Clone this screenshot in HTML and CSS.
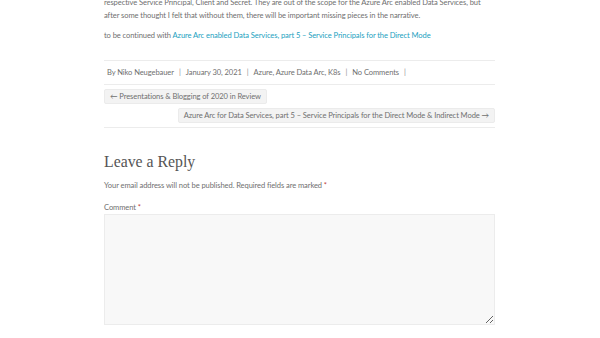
FILE: index.html
```html
<!DOCTYPE html>
<html>
<head>
<meta charset="utf-8">
<link rel="stylesheet" href="styles.css">
</head>
<body>
<div class="page">
  <div class="entry">
    <p class="para first">respective Service Principal, Client and Secret. They are out of the scope for the Azure Arc enabled Data Services, but after some thought I felt that without them, there will be important missing pieces in the narrative.</p>
    <p class="para">to be continued with <a href="#">Azure Arc enabled Data Services, part 5 – Service Principals for the Direct Mode</a></p>
  </div>
  <div class="meta">
    <span>By Niko Neugebauer</span><span class="sep">|</span><span>January 30, 2021</span><span class="sep">|</span><span>Azure, Azure Data Arc, K8s</span><span class="sep">|</span><span>No Comments</span><span class="sep">|</span>
  </div>
  <nav class="postnav">
    <div class="prev"><a href="#" class="navbtn">← Presentations &amp; Blogging of 2020 in Review</a></div>
    <div class="next"><a href="#" class="navbtn">Azure Arc for Data Services, part 5 – Service Principals for the Direct Mode &amp; Indirect Mode →</a></div>
  </nav>
  <section class="reply">
    <h3 class="reply-title">Leave a Reply</h3>
    <p class="notes">Your email address will not be published. Required fields are marked <span class="req">*</span></p>
    <label class="label">Comment <span class="req">*</span></label>
    <textarea class="comment"></textarea>
  </section>
</div>
</body>
</html>
```

FILE: styles.css
```css
html, body { margin: 0; padding: 0; background: #fff; }
body { font-family: Lato, "Liberation Sans", sans-serif; color: #6f6f6f; font-size: 7.55px; letter-spacing: -0.08px; }
.page { width: 391px; margin: 0 0 0 104px; }
.para { margin: 0 0 8px; line-height: 12.5px; }
.para.first { margin-top: -3px; }
.entry { padding-bottom: 9px; }
a { color: #1b9fc0; text-decoration: none; }
.meta { border-top: 1px solid #ececec; border-bottom: 1px solid #ececec; height: 23px; display: flex; align-items: center; padding-left: 3px; }
.sep { margin: 0 5px; color: #8a8a8a; }
.postnav { padding: 4px 0 4px; border-bottom: 1px solid #ececec; display: flex; flex-direction: column; gap: 4px; }
.prev { display: flex; justify-content: flex-start; }
.next { display: flex; justify-content: flex-end; }
.navbtn { display: block; background: #f3f3f3; border: 1px solid #ebebeb; border-radius: 2px; color: #6f6f6f; padding: 2px 5px; line-height: 9px; }
.reply { padding-top: 24px; }
.reply-title { font-family: "Liberation Serif", serif; font-weight: normal; font-size: 15.8px; line-height: 20px; color: #555; margin: 0 0 8px; letter-spacing: 0; }
.notes { margin: 0 0 10px; line-height: 12px; }
.req { color: #c04040; }
.label { display: block; line-height: 12px; margin-bottom: 0; }
.comment { display: block; width: 391px; height: 111px; box-sizing: border-box; background: #f8f8f8; border: 1px solid #ececec; margin: 0; padding: 0; }
```
